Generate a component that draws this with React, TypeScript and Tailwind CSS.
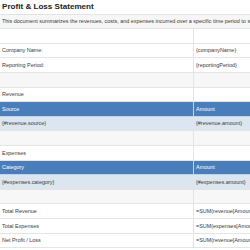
import React from "react";

type Row = {
  a?: string;
  b?: string;
  kind?: "plain" | "gray" | "head" | "data";
};

const rows: Row[] = [
  { kind: "plain" },
  { a: "Company Name:", b: "{companyName}" },
  { a: "Reporting Period:", b: "{reportingPeriod}" },
  { kind: "gray" },
  { a: "Revenue" },
  { a: "Source", b: "Amount", kind: "head" },
  { a: "{#revenue.source}", b: "{#revenue.amount}", kind: "data" },
  { kind: "gray" },
  { a: "Expenses" },
  { a: "Category", b: "Amount", kind: "head" },
  { a: "{#expenses.category}", b: "{#expenses.amount}", kind: "data" },
  { kind: "gray" },
  { a: "Total Revenue", b: "=SUM(revenue[Amount])" },
  { a: "Total Expenses", b: "=SUM(expenses[Amount])" },
  { a: "Net Profit / Loss", b: "=SUM(revenue[Amount])-SUM(expenses[Amount])" },
];

export default function App() {
  return (
    <div
      className="w-[250px] h-[250px] overflow-hidden bg-white text-[#3a3a3a]"
      style={{ fontFamily: '"Liberation Sans", Arial, sans-serif' }}
    >
      <div className="w-[400px]">
        <div className="h-[14.6px] flex items-center px-[2px] border-b border-[#e4e4e4] text-[8.1px] font-bold text-[#222]">
          Profit &amp; Loss Statement
        </div>
        <div className="h-[14.6px] flex items-center px-[2px] border-b border-[#e4e4e4] bg-[#f6f6f6] text-[5.45px] whitespace-nowrap">
          This document summarizes the revenues, costs, and expenses incurred over a specific time period to show the net profit or loss.
        </div>
        {rows.map((r, i) => {
          const kind = r.kind ?? "plain";
          const bg =
            kind === "head"
              ? "bg-[#4a7ebb] text-white"
              : kind === "data"
              ? "bg-[#dce6f1]"
              : kind === "gray"
              ? "bg-[#f7f7f7]"
              : "bg-white";
          const line = kind === "head" ? "border-[#c3d3e6]" : "border-[#e4e4e4]";
          return (
            <div
              key={i}
              className={`h-[14.6px] flex border-b ${line} ${bg} text-[5.45px] whitespace-nowrap`}
            >
              <div className={`w-[194px] shrink-0 flex items-center px-[2px] border-r ${line}`}>
                {r.a}
              </div>
              <div className="flex-1 flex items-center px-[2px]">{r.b}</div>
            </div>
          );
        })}
      </div>
    </div>
  );
}
